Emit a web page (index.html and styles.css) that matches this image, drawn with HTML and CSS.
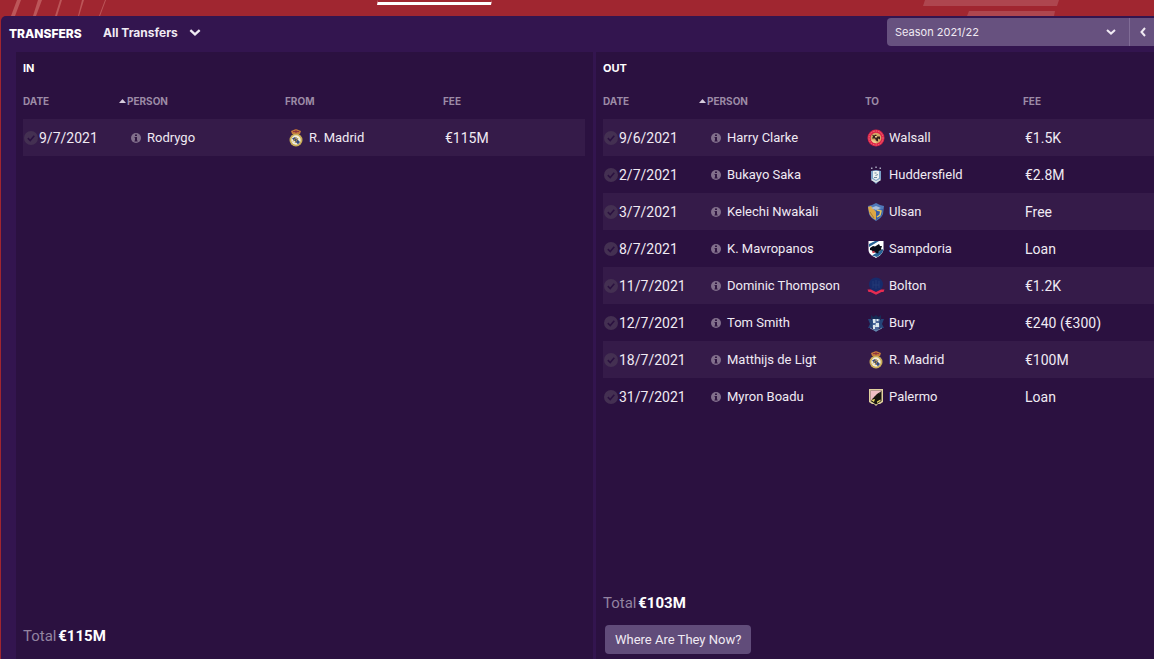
FILE: index.html
```html
<!DOCTYPE html>
<html lang="en">
  <head>
    <meta charset="UTF-8" />
    <meta name="viewport" content="width=device-width, initial-scale=1.0" />
    <title>Transfers</title>
    <link rel="stylesheet" href="styles.css">
  </head>
  <body>
    <!-- shared icons -->
    <svg class="sprite" aria-hidden="true">
      <symbol id="check" viewBox="0 0 14 14">
        <circle cx="7" cy="7" r="7" fill="#443052" />
        <path d="M3.8 7.2 6.2 9.5 10.3 4.8" fill="none" stroke="#2b1140" stroke-width="1.6" />
      </symbol>
      <symbol id="info" viewBox="0 0 10 10">
        <circle cx="5" cy="5" r="5" fill="#826f8c" />
        <path d="M4 1.6h2v1.5H4zM3.6 4H6v3.4h.6v1H3.5v-1H4V5h-.4z" fill="#301642" />
      </symbol>
      <symbol id="down" viewBox="0 0 10 6">
        <path d="M1 1 5 4.6 9 1" fill="none" stroke="currentColor" stroke-width="2" />
      </symbol>
      <symbol id="madrid" viewBox="0 0 18 18">
        <path d="M5 5 4 2 6.5 1 9 0l2.500 1L14 2l-1 3z" fill="#c47a3c" />
        <path d="M6 2.600h6M9 .5v4" stroke="#8c3040" stroke-width="1" />
        <circle cx="9" cy="11" r="6.500" fill="#cbae58" />
        <circle cx="9" cy="11" r="4.700" fill="#f1eddc" />
        <path d="M5 9.500 8 8l5 5-2 2.300z" fill="#344a80" />
        <path d="M6 12.500 9.500 8M8 14l3-5" stroke="#b58a35" stroke-width="1" />
      </symbol>
      <symbol id="walsall" viewBox="0 0 18 18">
        <circle cx="9" cy="9" r="8.500" fill="#de2546" />
        <circle cx="9" cy="9" r="7" fill="none" stroke="#ed7186" stroke-width="1" stroke-dasharray="1.500 1" />
        <circle cx="9" cy="9" r="5.300" fill="#d4a866" />
        <path d="M5 5.500l2 1 2-1 1 2 3 0v3l-2-1v3l-2-1-1-2-3 0 1-2z" fill="#33201c" />
        <path d="M4 11l4 .5 2 3-4-1zM8 7h2v1.500H8z" fill="#efcc91" />
      </symbol>
      <symbol id="huddersfield" viewBox="0 0 18 18">
        <path d="M4 1.500h1.500V3H4zM8.300 .5h1.500V2H8.300zM12.500 1.500H14V3h-1.500z" fill="#a9a8bd" />
        <path d="M4 5l5-1 5 1v8l-5 5-5-5z" fill="#7ba2c7" />
        <path d="M6 5h6v7l-3 2-3-2z" fill="#edf2f2" />
        <path d="M7.500 7h2M8.500 9.500l2.500-1M7 11.500h3" stroke="#6b8a9d" stroke-width="1" />
        <path d="M4.500 13.500 9 16l4.500-2.500" fill="none" stroke="#dce4e5" stroke-width="1.500" />
      </symbol>
      <symbol id="ulsan" viewBox="0 0 18 18">
        <path d="M1 3 5 2l4-2 4 2 4 1-1 8c-1 3-4 5-7 7-3-2-6-4-7-7z" fill="#4f79b9" />
        <path d="M1 4 4 3l5 6v8c-4-2-6-4-7-8z" fill="#dca744" />
        <path d="M9 8l7-2-1 6-6 5z" fill="#355ca5" />
        <path d="M10 7l4 1-1 4-3 2" stroke="#e6c863" stroke-width="1.500" fill="none" />
        <path d="M3 9l4 6" stroke="#a87b35" stroke-width="1" />
        <path d="M4 5 9 3l5 2-5 2z" fill="#a9bfdb" />
      </symbol>
      <symbol id="sampdoria" viewBox="0 0 18 18">
        <path d="M1.500 1h15v9c-1 4-4 6-7.500 8-3.500-2-7.500-4-7.500-8z" fill="#fff" />
        <path d="M2 4 8 1h4L2 7zM5 15.500 16 9v2c-1 3-3 4-6 6z" fill="#266295" />
        <path d="M3 8 6 6l2 .5L12 4l1 2 2 0-1 3 1 1-3 1-1 2.500-3-1-2 0-1-2-2-.5z" fill="#090c18" />
        <path d="M5.500 12.500l2-1" stroke="#e7364c" stroke-width="1.500" />
      </symbol>
      <symbol id="bolton" viewBox="0 0 18 18">
        <circle cx="9" cy="7.500" r="7" fill="#172b6b" />
        <path d="M6 4v7M9 3v9M12 4v7M6 8h6" stroke="#243a76" stroke-width="1" />
        <path d="M.5 12.500 4 12.500l5 2.500 5-2.500 3.500 0-1 2.500h-2L9 17.800 3.500 15h-2z" fill="#e52b51" />
      </symbol>
      <symbol id="bury" viewBox="0 0 18 18">
        <path d="M5 4h8v9l-4 5-4-5z" fill="#4a6799" />
        <path d="M1 5l3 0 2 3-1 6-4 0 2-4zM17 5l-3 0-2 3 1 6 4 0-2-4z" fill="#254579" />
        <path d="M4 1l2.500 2L9 1l2.500 2L14 1v4H4z" fill="#172a53" />
        <path d="M6 5h2.500v4H6zM9 9h3l0 4H8zM6 11h2v4H6zM9.500 5h2v2h-2z" fill="#dbe8ed" />
        <path d="M3 14l6 3 6-3" fill="none" stroke="#6e94b8" stroke-width="1" />
      </symbol>
      <symbol id="palermo" viewBox="0 0 18 18">
        <path d="M2 1h14v13l-3 2H11l-2 2-2-2H5l-3-2z" fill="#e0d19e" />
        <path d="M3.500 2.500h11V13L9 16.500 3.500 13z" fill="#17150f" />
        <path d="M3.500 2.500h11L12 6 6 10l-2.500 3.500z" fill="#efbec4" />
        <path d="M7 9l3-3 3-2-1 4 2 2-4 0-2 3z" fill="#17150f" />
        <path d="M4 12l4-1-1 3zM10 13.500l3.500-2V13L10 15z" fill="#e9db69" />
      </symbol>
    </svg>

    <div class="topbar">
      <svg class="streaks" viewBox="0 0 110 16" width="110" height="16" aria-hidden="true">
        <path d="M17 0h4l-6 16h-4zM38 0h4l-6 16h-3zM60 0h2l-5 16h-2zM82 0h2l-5 16h-1zM105 0h1l-6 16h-1z" />
      </svg>
      <div class="tab"></div>
      <svg class="bands" viewBox="0 0 140 16" width="140" height="16" aria-hidden="true">
        <path d="M2 0h134l-2 6H0zM46 11h86l-1 5H44z" />
      </svg>
    </div>

    <main class="transfers">
      <header class="header">
        <h1>TRANSFERS</h1>
        <label class="dropdown filter">
          <select aria-label="Transfer type">
            <option>All Transfers</option>
          </select>
          <svg width="12" height="7"><use href="#down" /></svg>
        </label>
        <label class="dropdown season">
          <select aria-label="Season">
            <option>Season 2021/22</option>
          </select>
          <svg width="10" height="6"><use href="#down" /></svg>
        </label>
        <button type="button" class="prev" aria-label="Previous season">
          <svg viewBox="0 0 6 10" width="6" height="10"><path d="M5 1 1.500 5 5 9" fill="none" stroke="currentColor" stroke-width="2" /></svg>
        </button>
      </header>

      <div class="panels">
        <section class="panel panel-in">
          <h2>IN</h2>
          <table>
            <thead>
              <tr>
                <th class="date"><span>DATE <svg viewBox="0 0 7 4" width="7" height="4"><path d="M0 4 3.500 0 7 4z" /></svg></span></th>
                <th class="person">PERSON</th>
                <th class="club">FROM</th>
                <th>FEE</th>
              </tr>
            </thead>
            <tbody>
              <tr>
                <td><span class="cell when"><svg><use href="#check" /></svg>9/7/2021</span></td>
                <td><span class="cell who"><svg><use href="#info" /></svg>Rodrygo</span></td>
                <td><span class="cell team"><svg><use href="#madrid" /></svg>R. Madrid</span></td>
                <td class="fee">€115M</td>
              </tr>
            </tbody>
          </table>
          <p class="total">Total <b>€115M</b></p>
        </section>

        <section class="panel panel-out">
          <h2>OUT</h2>
          <table>
            <thead>
              <tr>
                <th class="date"><span>DATE <svg viewBox="0 0 7 4" width="7" height="4"><path d="M0 4 3.500 0 7 4z" /></svg></span></th>
                <th class="person">PERSON</th>
                <th class="club">TO</th>
                <th>FEE</th>
              </tr>
            </thead>
            <tbody>
              <tr>
                <td><span class="cell when"><svg><use href="#check" /></svg>9/6/2021</span></td>
                <td><span class="cell who"><svg><use href="#info" /></svg>Harry Clarke</span></td>
                <td><span class="cell team"><svg><use href="#walsall" /></svg>Walsall</span></td>
                <td class="fee">€1.5K</td>
              </tr>
              <tr>
                <td><span class="cell when"><svg><use href="#check" /></svg>2/7/2021</span></td>
                <td><span class="cell who"><svg><use href="#info" /></svg>Bukayo Saka</span></td>
                <td><span class="cell team"><svg><use href="#huddersfield" /></svg>Huddersfield</span></td>
                <td class="fee">€2.8M</td>
              </tr>
              <tr>
                <td><span class="cell when"><svg><use href="#check" /></svg>3/7/2021</span></td>
                <td><span class="cell who"><svg><use href="#info" /></svg>Kelechi Nwakali</span></td>
                <td><span class="cell team"><svg><use href="#ulsan" /></svg>Ulsan</span></td>
                <td class="fee">Free</td>
              </tr>
              <tr>
                <td><span class="cell when"><svg><use href="#check" /></svg>8/7/2021</span></td>
                <td><span class="cell who"><svg><use href="#info" /></svg>K. Mavropanos</span></td>
                <td><span class="cell team"><svg><use href="#sampdoria" /></svg>Sampdoria</span></td>
                <td class="fee">Loan</td>
              </tr>
              <tr>
                <td><span class="cell when"><svg><use href="#check" /></svg>11/7/2021</span></td>
                <td><span class="cell who"><svg><use href="#info" /></svg>Dominic Thompson</span></td>
                <td><span class="cell team"><svg><use href="#bolton" /></svg>Bolton</span></td>
                <td class="fee">€1.2K</td>
              </tr>
              <tr>
                <td><span class="cell when"><svg><use href="#check" /></svg>12/7/2021</span></td>
                <td><span class="cell who"><svg><use href="#info" /></svg>Tom Smith</span></td>
                <td><span class="cell team"><svg><use href="#bury" /></svg>Bury</span></td>
                <td class="fee">€240 (€300)</td>
              </tr>
              <tr>
                <td><span class="cell when"><svg><use href="#check" /></svg>18/7/2021</span></td>
                <td><span class="cell who"><svg><use href="#info" /></svg>Matthijs de Ligt</span></td>
                <td><span class="cell team"><svg><use href="#madrid" /></svg>R. Madrid</span></td>
                <td class="fee">€100M</td>
              </tr>
              <tr>
                <td><span class="cell when"><svg><use href="#check" /></svg>31/7/2021</span></td>
                <td><span class="cell who"><svg><use href="#info" /></svg>Myron Boadu</span></td>
                <td><span class="cell team"><svg><use href="#palermo" /></svg>Palermo</span></td>
                <td class="fee">Loan</td>
              </tr>
            </tbody>
          </table>
          <p class="total">Total <b>€103M</b></p>
          <button type="button" class="where">Where Are They Now?</button>
        </section>
      </div>
    </main>
  </body>
</html>
```

FILE: styles.css
```css
* {
  box-sizing: border-box;
}
body {
  display: flex;
  flex-direction: column;
  min-height: 100vh;
  margin: 0;
  background-color: #a02630;
  color: #f0eaf3;
  font-family: Roboto, "Liberation Sans", sans-serif;
  font-size: 13px;
}
h1,
h2,
p {
  margin: 0;
}
svg {
  display: block;
  flex: none;
}
select,
button {
  border: none;
  color: inherit;
  font-family: inherit;
}
.sprite {
  position: absolute;
  width: 0;
  height: 0;
}

/* red strip above the window */
.topbar {
  display: grid;
  grid-template-columns: 377fr 115fr 431fr 231fr;
  height: 16px;
}
.streaks {
  fill: #bc5659;
}
.tab {
  height: 5px;
  border-top: 2px solid #a02630;
  background-color: #fff;
  clip-path: polygon(1px 0, 100% 0, calc(100% - 1px) 100%, 0 100%);
}
.bands {
  grid-column: 4;
  fill: #ae464f;
}

.transfers {
  display: flex;
  flex: 1;
  flex-direction: column;
  margin-left: 1px;
  border-radius: 5px 0 0 0;
  background-color: #33154f;
}
.header {
  display: flex;
  align-items: center;
  height: 36px;
  padding: 0 0 6px 8px;
  font-family: Inter, "Liberation Sans", sans-serif;
}
.header h1 {
  width: 94px;
  padding-top: 5px;
  color: #fff;
  font-size: 12px;
  font-weight: 800;
}
.dropdown {
  display: flex;
  align-items: center;
}
.dropdown select {
  appearance: none;
  width: 100%;
  height: 28px;
  padding: 0;
  background: none;
  font-size: 12px;
}
.filter {
  width: 98px;
  padding-top: 3px;
}
.filter select {
  font-weight: 700;
}
.season {
  width: 242px;
  height: 28px;
  margin: 2px 1px 0 auto;
  padding: 0 13px 0 8px;
  border-radius: 4px 0 0 4px;
  background-color: #67517f;
}
.season select {
  font-size: 11px;
}
.prev {
  display: flex;
  align-items: center;
  width: 24px;
  height: 28px;
  margin-top: 2px;
  padding: 0 0 0 10px;
  background-color: #67517f;
  box-shadow: -1px 0 #806c96;
}

.panels {
  display: grid;
  flex: 1;
  grid-template-columns: 577fr 558fr;
  gap: 3px;
  padding-left: 15px;
}
.panel {
  display: flex;
  flex-direction: column;
  align-items: flex-start;
  padding-left: 7px;
  background-color: #2b1140;
}
.panel-in {
  padding-right: 8px;
  padding-bottom: 11px;
}
.panel-out {
  padding-bottom: 5px;
}
.panel h2 {
  color: #fff;
  font-family: Inter, "Liberation Sans", sans-serif;
  font-size: 11px;
  font-weight: 700;
  line-height: 32px;
}
table {
  width: 100%;
  table-layout: fixed;
  border-collapse: collapse;
}
th {
  height: 35px;
  padding: 0 0 2px;
  color: #9c8ba6;
  font-family: Inter, "Liberation Sans", sans-serif;
  font-size: 10px;
  font-weight: 700;
  text-align: left;
}
th span {
  display: flex;
  align-items: center;
  justify-content: space-between;
  padding-right: 1px;
}
th svg {
  fill: #d5cbdc;
}
.date {
  width: 104px;
}
.person,
.club {
  width: 158px;
}
td {
  height: 37px;
  padding: 0;
  white-space: nowrap;
}
tbody tr:nth-child(odd) {
  background-color: #351b49;
}
.cell {
  display: flex;
  align-items: center;
}
.when {
  gap: 1px;
  padding-left: 1px;
  font-size: 14px;
}
.when svg {
  width: 14px;
  height: 14px;
}
.who {
  gap: 6px;
  padding-left: 4px;
}
.who svg {
  width: 10px;
  height: 10px;
}
.team {
  gap: 4px;
  padding-left: 2px;
}
.team svg {
  width: 18px;
  height: 18px;
}
td.fee {
  padding-left: 2px;
  font-size: 14px;
}

.total {
  margin-top: auto;
  color: #9383a0;
  font-size: 15px;
  line-height: 24px;
}
.total b {
  margin-left: -2px;
  color: #fff;
}
.where {
  height: 29px;
  margin: 10px 0 0 2px;
  padding: 0 10px;
  border-radius: 4px;
  background-color: #614c7a;
  font-size: 13px;
}
```
